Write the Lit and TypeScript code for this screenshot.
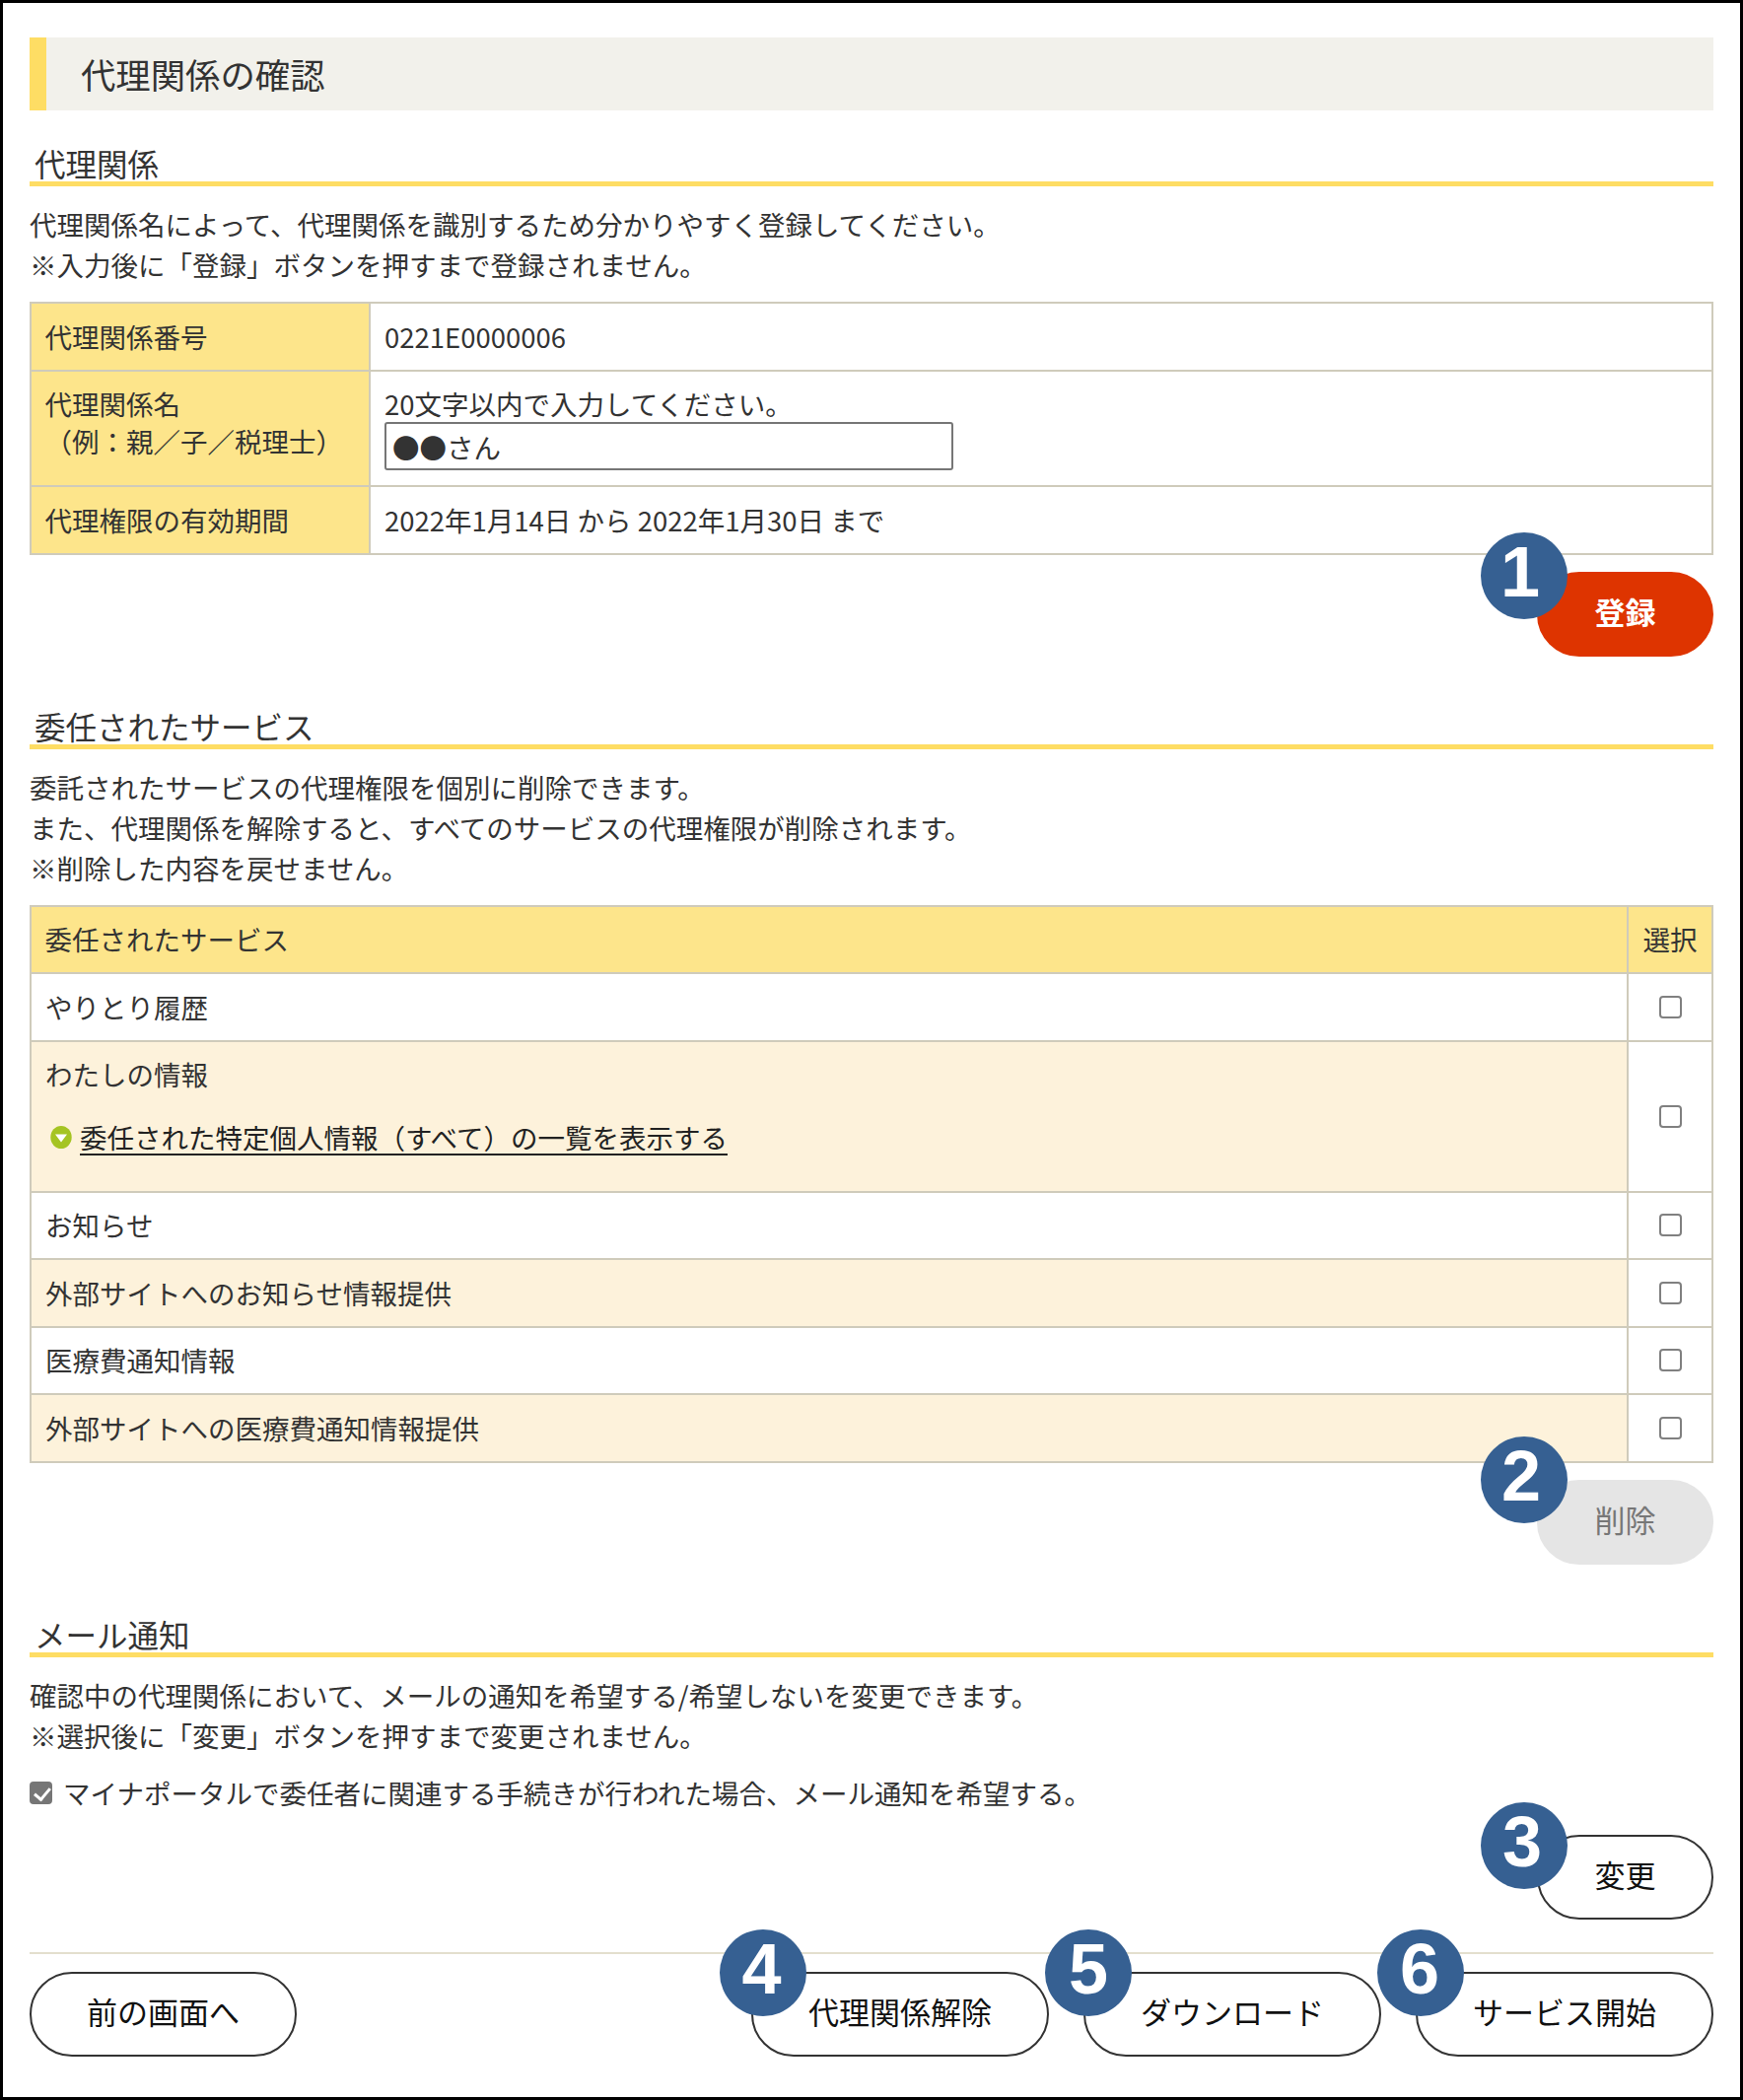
import { LitElement, html, css, nothing } from "lit";
import { customElement } from "lit/decorators.js";

interface Service {
  name: string;
  stripe: boolean;
  link?: string;
}

const SERVICES: Service[] = [
  { name: "やりとり履歴", stripe: false },
  { name: "わたしの情報", stripe: true, link: "委任された特定個人情報（すべて）の一覧を表示する" },
  { name: "お知らせ", stripe: false },
  { name: "外部サイトへのお知らせ情報提供", stripe: true },
  { name: "医療費通知情報", stripe: false },
  { name: "外部サイトへの医療費通知情報提供", stripe: true },
];

@customElement("app-root")
export class AppRoot extends LitElement {
  static styles = css`
    :host {
      display: block;
      font-family: "Noto Sans CJK JP", "Noto Sans", sans-serif;
      font-size: 27.5px;
      line-height: 41px;
      color: #333;
    }
    * { box-sizing: border-box; }
    .page {
      height: 2130px;
      border: 3px solid #000;
      padding: 35px 27px 0;
      background: #fff;
    }
    .title {
      height: 74px;
      margin: 0;
      padding-left: 35px;
      border-left: 17px solid #fedd64;
      background: #f2f1eb;
      font-size: 35.36px;
      font-weight: 400;
      line-height: 74px;
    }
    .heading {
      margin: 0;
      height: 77px;
      padding: 36px 0 0 5px;
      border-bottom: 5px solid #fedd64;
      font-size: 31.5px;
      font-weight: 400;
      line-height: 34px;
    }
    .heading.later { margin-top: 17px; }
    .text { margin: 18px 0 17px; }
    .text p { margin: 0; }
    table {
      width: 1708px;
      border-collapse: collapse;
      table-layout: fixed;
      line-height: 38px;
    }
    th, td {
      border: 2px solid #cfcbbb;
      padding: 13.75px 14px 14.75px;
      font-weight: 400;
      text-align: left;
      vertical-align: top;
    }
    th { background: #fde58b; padding-left: 13.5px; }
    .col-label { width: 344px; }
    .col-check { width: 86px; }
    .stripe { background: #fdf2db; }
    .check { text-align: center; vertical-align: middle; padding: 0; }
    .check-head { text-align: center; padding-left: 0; padding-right: 0; }
    input[type="checkbox"] {
      appearance: none;
      position: relative;
      display: block;
      flex: none;
      width: 23px;
      height: 23px;
      margin: 0;
      border: 2px solid #808080;
      border-radius: 4px;
      background: #fff;
    }
    .check input[type="checkbox"] { margin: 0 auto; }
    input[type="checkbox"]:checked { background: #767676; border-color: #767676; }
    input[type="checkbox"]:checked::after {
      content: "";
      position: absolute;
      left: 5.5px;
      top: 1.5px;
      width: 7px;
      height: 13px;
      border: solid #fff;
      border-width: 0 3px 3px 0;
      transform: rotate(40deg);
    }
    .name-input {
      display: block;
      width: 577px;
      height: 49px;
      padding: 0 6px;
      border: 2px solid #767676;
      border-radius: 3px;
      background: #fff;
      color: #333;
      font: inherit;
    }
    .list-link {
      display: flex;
      align-items: center;
      gap: 8px;
      margin: 26px 0 20.5px 5px;
      color: #222;
    }
    .list-link a {
      color: inherit;
      text-decoration: underline;
      text-underline-offset: 5px;
    }
    .list-link svg { flex: none; }
    .row-end { display: flex; justify-content: flex-end; }
    .row-end.register, .row-end.remove { margin-top: 17px; }
    .pill {
      position: relative;
      display: flex;
      align-items: center;
      justify-content: center;
      width: 179px;
      height: 86px;
      padding: 0 0 6px;
      border: 2px solid #333;
      border-radius: 43px;
      background: #fff;
      color: #111;
      font: inherit;
      font-size: 31px;
    }
    .pill.red {
      border-color: #de3400;
      background: #de3400;
      color: #fff;
      font-weight: 700;
    }
    .pill.grey {
      border-color: #e5e5e5;
      background: #e5e5e5;
      color: #777;
    }
    .pill.wide { width: 302px; }
    .pill.back { width: 271px; }
    .badge {
      position: absolute;
      left: var(--bx);
      top: var(--by);
      width: 88px;
      height: 88px;
      padding-right: var(--dx);
      border-radius: 50%;
      background: #366092;
      color: #fff;
      font: 700 72px/80px "Liberation Sans", Arial, sans-serif;
      text-align: center;
    }
    .mail-check {
      display: flex;
      align-items: center;
      gap: 11px;
      margin-top: 16px;
    }
    .row-end.change { margin-top: 22px; }
    .actions {
      display: flex;
      align-items: center;
      margin-top: 33px;
      padding-top: 18px;
      border-top: 2px solid #e3dfce;
      gap: 35px;
    }
    .spacer { flex: 1; }
  `;

  private badge(n: number, x: number, y: number, dx: number) {
    return html`<span class="badge" style="--bx:${x}px;--by:${y}px;--dx:${dx}px">${n}</span>`;
  }

  private serviceRow(s: Service) {
    return html`<tr>
      <td class=${s.stripe ? "stripe" : ""}>
        ${s.name}
        ${s.link
          ? html`<div class="list-link">
              <svg width="22" height="23" viewBox="0 0 22 23" aria-hidden="true">
                <ellipse cx="11" cy="11.5" rx="10.7" ry="11.5" fill="#a5c423"></ellipse>
                <path d="M5 8.5h12l-6 8z" fill="#fff"></path>
              </svg>
              <a href="#">${s.link}</a>
            </div>`
          : nothing}
      </td>
      <td class="check"><input type="checkbox" /></td>
    </tr>`;
  }

  render() {
    return html`<div class="page">
      <h1 class="title">代理関係の確認</h1>

      <h2 class="heading">代理関係</h2>
      <div class="text">
        <p>代理関係名によって、代理関係を識別するため分かりやすく登録してください。</p>
        <p>※入力後に「登録」ボタンを押すまで登録されません。</p>
      </div>
      <table>
        <colgroup><col class="col-label" /><col /></colgroup>
        <tr><th>代理関係番号</th><td>0221E0000006</td></tr>
        <tr>
          <th>代理関係名<br />（例：親／子／税理士）</th>
          <td>20文字以内で入力してください。<input class="name-input" type="text" value="●●さん" /></td>
        </tr>
        <tr><th>代理権限の有効期間</th><td>2022年1月14日 から 2022年1月30日 まで</td></tr>
      </table>
      <div class="row-end register">
        <button class="pill red">登録${this.badge(1, -59, -42, 8)}</button>
      </div>

      <h2 class="heading later">委任されたサービス</h2>
      <div class="text">
        <p>委託されたサービスの代理権限を個別に削除できます。</p>
        <p>また、代理関係を解除すると、すべてのサービスの代理権限が削除されます。</p>
        <p>※削除した内容を戻せません。</p>
      </div>
      <table>
        <colgroup><col /><col class="col-check" /></colgroup>
        <tr><th>委任されたサービス</th><th class="check-head">選択</th></tr>
        ${SERVICES.map((s) => this.serviceRow(s))}
      </table>
      <div class="row-end remove">
        <button class="pill grey">削除${this.badge(2, -59, -46, 6)}</button>
      </div>

      <h2 class="heading later">メール通知</h2>
      <div class="text">
        <p>確認中の代理関係において、メールの通知を希望する/希望しないを変更できます。</p>
        <p>※選択後に「変更」ボタンを押すまで変更されません。</p>
      </div>
      <label class="mail-check">
        <input type="checkbox" checked />
        <span>マイナポータルで委任者に関連する手続きが行われた場合、メール通知を希望する。</span>
      </label>
      <div class="row-end change">
        <button class="pill">変更${this.badge(3, -59, -35, 4)}</button>
      </div>

      <div class="actions">
        <button class="pill back">前の画面へ</button>
        <span class="spacer"></span>
        <button class="pill wide">代理関係解除${this.badge(4, -34, -45, 3)}</button>
        <button class="pill wide">ダウンロード${this.badge(5, -41, -45, 0)}</button>
        <button class="pill wide">サービス開始${this.badge(6, -41, -45, 2)}</button>
      </div>
    </div>`;
  }
}
